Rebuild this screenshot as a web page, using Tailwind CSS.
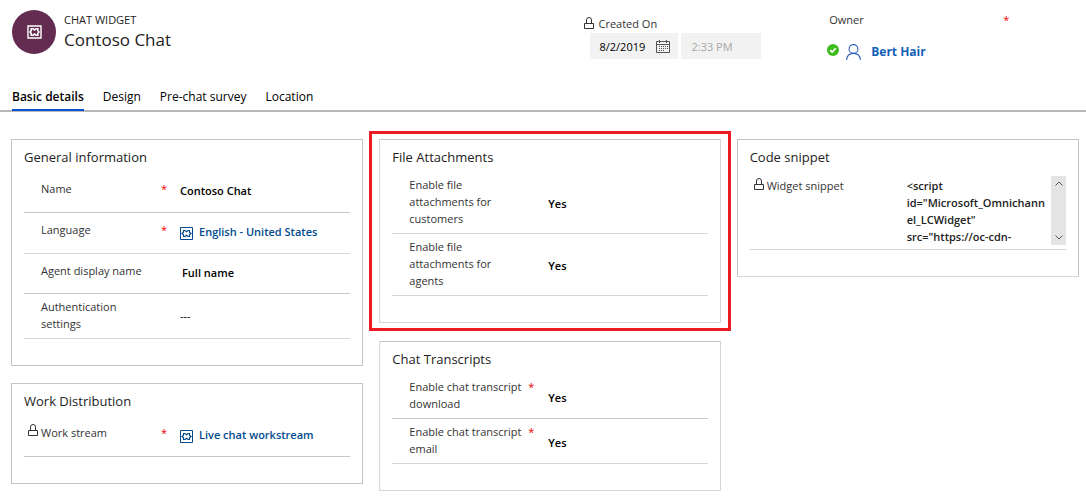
<!DOCTYPE html>
<html lang="en">
<head>
<meta charset="utf-8">
<title>Contoso Chat</title>
<script src="https://cdn.jsdelivr.net/npm/@tailwindcss/browser@4"></script>
</head>
<body class="bg-white font-['Open_Sans','Noto_Sans',sans-serif] text-[11px] leading-[17px] text-[#333]">
<svg class="hidden">
  <symbol id="lock" viewBox="0 0 10 13"><path d="M.5 6.500h9v5h-9zM2.500 6.500V3a2.500 2.500 0 0 1 5 0v3.500" fill="none" stroke="currentColor"/></symbol>
  <symbol id="entity" viewBox="0 0 13 13"><path d="M.5.5h12v12H.5z" fill="none" stroke="currentColor"/><path d="M3.500 3.500H5l1.500 1.300L8 3.500h1.500v1.700L11 6.500 9.500 7.800v1.700H8L6.500 8.200 5 9.500H3.500V7.800L2 6.500l1.500-1.300z" fill="none" stroke="currentColor" stroke-width="1.200"/></symbol>
</svg>

<header class="border-b-2 border-[#b8b8b8]">
  <div class="grid grid-cols-[573fr_245fr_257fr] pl-3 pt-[10px]">
    <div class="flex gap-2">
      <div class="flex size-11 items-center justify-center rounded-full bg-[#642c50] text-white">
        <svg class="h-[14px] w-[15px]" viewBox="0 0 15 14" fill="none" stroke="currentColor"><path d="M1 1h13v12H1z" stroke-width="1.400"/><path d="M4.200 3.700h1.600l1.700 1.300 1.700-1.300h1.600v2L12 7l-1.200 1.300v2H9.200L7.500 9l-1.700 1.300H4.200v-2L3 7l1.200-1.300z" stroke-width="1.600"/></svg>
      </div>
      <div>
        <p class="leading-5 text-[#222]">CHAT WIDGET</p>
        <h1 class="text-[17px] leading-5 text-[#222]">Contoso Chat</h1>
      </div>
    </div>
    <div class="pt-[5px]">
      <label for="created" class="flex items-center gap-1"><svg class="h-[13px] w-[10px]"><use href="#lock"/></svg>Created On</label>
      <div class="flex gap-[3px] pl-[6px] pt-px">
        <div class="flex h-[26px] w-[88px] items-center bg-[#f2f2f2] pl-[9px] pr-2">
          <input id="created" type="text" readonly value="8/2/2019" class="w-0 grow text-black">
          <svg class="h-[13px] w-[14px] text-[#555]" viewBox="0 0 14 13" fill="none" stroke="currentColor"><path d="M.5 1.500h13v11H.5zM.5 4.500h13M3.500 0v3M10.500 0v3"/><path d="M3 6.500h9M3 8.500h9M3 10.500h6" stroke-dasharray="1 1"/></svg>
        </div>
        <input type="text" aria-label="Created time" readonly value="2:33 PM" class="h-[26px] w-20 bg-[#f2f2f2] px-[10px] text-[#a6a6a6]">
      </div>
    </div>
    <div class="pt-px">
      <p class="flex"><span class="w-[174px]">Owner</span><span class="text-[#e00]">*</span></p>
      <div class="-ml-[2px] flex items-center pt-[15px]">
        <svg class="-mt-1 size-3" viewBox="0 0 12 12"><circle cx="6" cy="6" r="6" fill="#3fbd1d"/><path d="M3.200 6.100l2 2 3.500-3.800" fill="none" stroke="#fff" stroke-width="1.600"/></svg>
        <svg class="ml-[7px] mr-[10px] h-4 w-[15px]" viewBox="0 0 15 16" fill="none" stroke="#2f62c0" stroke-width="1.100"><circle cx="7.500" cy="5" r="4.400"/><path d="M.6 16c.3-4 3-6.600 6.900-6.600s6.600 2.600 6.900 6.600"/></svg>
        <a href="#" class="text-[12px] font-bold text-[#1160b7]">Bert Hair</a>
      </div>
    </div>
  </div>
  <nav class="-mb-px mt-6 flex gap-[19px] pl-3 text-[12px] text-black">
    <a href="#" class="border-b-2 border-[#0b53ce] pb-1 pt-1 font-semibold">Basic details</a>
    <a href="#" class="py-1">Design</a>
    <a href="#" class="py-1">Pre-chat survey</a>
    <a href="#" class="py-1">Location</a>
  </nav>
</header>

<main class="grid grid-cols-[352fr_341fr_342fr] items-start gap-x-4 pb-2 pl-[11px] pr-[7px] pt-[27px]">
  <div class="flex flex-col gap-[17px]">
    <section class="border border-[#c3c3c3] px-3 pb-[26px]">
      <h2 class="h-8 pt-[9px] text-[13px] text-[#222]">General information</h2>
      <div class="grid min-h-[41px] grid-cols-[17px_120px_19px_1fr] border-b border-[#c8c8c8] pt-2">
        <label for="name" class="col-start-2">Name</label><span class="text-[#e00]">*</span>
        <input id="name" type="text" value="Contoso Chat" class="mt-[2px] h-[17px] w-full font-semibold text-black">
      </div>
      <div class="grid min-h-[41px] grid-cols-[17px_120px_19px_1fr] border-b border-[#d6d6d6] pt-2">
        <span class="col-start-2">Language</span><span class="text-[#e00]">*</span>
        <a href="#" class="flex h-5 items-center gap-[6px] font-semibold text-[#004b8f]"><svg class="mt-1 size-[13px]"><use href="#entity"/></svg>English - United States</a>
      </div>
      <div class="grid min-h-10 grid-cols-[17px_120px_19px_1fr] border-b border-[#c8c8c8] pt-2">
        <label for="display" class="col-start-2">Agent display name</label>
        <select id="display" class="col-start-4 mt-[2px] h-[17px] w-full appearance-none pl-[2px] font-semibold text-black"><option>Full name</option></select>
      </div>
      <div class="grid grid-cols-[17px_120px_19px_1fr] items-center border-b border-[#d6d6d6] pb-[6px] pt-1">
        <label for="auth" class="col-start-2">Authentication<br>settings</label>
        <input id="auth" type="text" value="---" class="col-start-4 h-[17px] w-full text-black">
      </div>
    </section>
    <section class="border border-[#c3c3c3] px-3 pb-[26px]">
      <h2 class="h-8 pt-[9px] text-[13px] text-[#222]">Work Distribution</h2>
      <div class="grid min-h-[41px] grid-cols-[17px_120px_19px_1fr] border-b border-[#c8c8c8] pt-2">
        <svg class="ml-1 h-[13px] w-[10px]"><use href="#lock"/></svg>
        <span>Work stream</span><span class="text-[#e00]">*</span>
        <a href="#" class="flex h-5 items-center gap-[6px] font-semibold text-[#004b8f]"><svg class="mt-1 size-[13px]"><use href="#entity"/></svg>Live chat workstream</a>
      </div>
    </section>
  </div>

  <div class="flex flex-col gap-[18px]">
    <section class="relative border border-[#d6d6d6] border-t-[#c3c3c3] px-3 pb-[26px]">
      <div class="pointer-events-none absolute -inset-x-[11px] -bottom-[9px] -top-[9px] border-[3px] border-[#ed1c24]"></div>
      <h2 class="h-8 pt-[9px] text-[13px] text-[#222]">File Attachments</h2>
      <div class="grid grid-cols-[17px_120px_19px_1fr] items-center border-b border-[#d6d6d6] pb-[6px] pt-1">
        <label for="cust" class="col-start-2">Enable file<br>attachments for<br>customers</label>
        <select id="cust" class="col-start-4 mt-1 h-[17px] w-full appearance-none font-semibold text-black"><option>Yes</option><option>No</option></select>
      </div>
      <div class="grid grid-cols-[17px_120px_19px_1fr] items-center border-b border-[#d6d6d6] pb-[6px] pt-1">
        <label for="agents" class="col-start-2">Enable file<br>attachments for<br>agents</label>
        <select id="agents" class="col-start-4 mt-1 h-[17px] w-full appearance-none font-semibold text-black"><option>Yes</option><option>No</option></select>
      </div>
    </section>
    <section class="border border-[#d6d6d6] border-t-[#c3c3c3] px-3 pb-[26px]">
      <h2 class="h-8 pt-[9px] text-[13px] text-[#222]">Chat Transcripts</h2>
      <div class="grid grid-cols-[17px_119px_20px_1fr] border-b border-[#c8c8c8] pb-[6px] pt-1">
        <label for="dl" class="col-start-2">Enable chat transcript<br>download</label><span class="text-[#e00]">*</span>
        <select id="dl" class="mt-[11px] h-[17px] w-full appearance-none font-semibold text-black"><option>Yes</option><option>No</option></select>
      </div>
      <div class="grid grid-cols-[17px_119px_20px_1fr] border-b border-[#d6d6d6] pb-[6px] pt-1">
        <label for="mail" class="col-start-2">Enable chat transcript<br>email</label><span class="text-[#e00]">*</span>
        <select id="mail" class="mt-[11px] h-[17px] w-full appearance-none font-semibold text-black"><option>Yes</option><option>No</option></select>
      </div>
    </section>
  </div>

  <section class="border border-[#c3c3c3] border-b-[#d6d6d6] px-3 pb-[26px]">
    <h2 class="h-8 pt-[9px] text-[13px] text-[#222]">Code snippet</h2>
    <div class="grid grid-cols-[17px_140px_1fr_15px] border-b border-[#d6d6d6] pb-1 pt-1">
      <svg class="ml-1 mt-[2px] h-[13px] w-[10px]"><use href="#lock"/></svg>
      <label for="snippet" class="pt-px">Widget snippet</label>
      <textarea id="snippet" readonly class="h-[69px] w-full resize-none overflow-hidden break-all pr-[6px] pt-px font-semibold text-[#222]">&lt;script
id="Microsoft_Omnichannel_LCWidget"
src="https://oc-cdn-</textarea>
      <div class="flex h-[69px] flex-col items-center justify-between bg-[#e4e4e4] py-[5px] text-[#555]">
        <button aria-label="Scroll up" class="flex"><svg class="h-[5px] w-2" viewBox="0 0 8 5" fill="none" stroke="currentColor"><path d="M.5 4.500L4 1l3.500 3.500"/></svg></button>
        <button aria-label="Scroll down" class="flex"><svg class="h-[5px] w-2" viewBox="0 0 8 5" fill="none" stroke="currentColor"><path d="M.5.5L4 4 7.500.5"/></svg></button>
      </div>
    </div>
  </section>
</main>
</body>
</html>
